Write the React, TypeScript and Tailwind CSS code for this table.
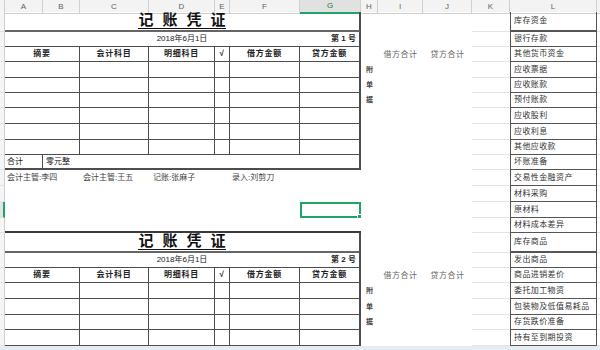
import React from 'react';

type Kind = 'title' | 'date' | 'head' | 'data' | 'total' | 'sign' | 'blank' | 'select';

interface RowSpec {
  kind: Kind;
  h: string;
  no?: number;
  side?: string;
  closeAbove?: boolean; // draws the top edge of the next voucher
}

const rows: RowSpec[] = [
  { kind: 'title', h: 'h-[20px]' },
  { kind: 'date', h: 'h-[15px]', no: 1 },
  { kind: 'head', h: 'h-[15px]' },
  { kind: 'data', h: 'h-[16px]', side: '附' },
  { kind: 'data', h: 'h-[15px]', side: '单' },
  { kind: 'data', h: 'h-[15px]', side: '据' },
  { kind: 'data', h: 'h-[16px]' },
  { kind: 'data', h: 'h-[16px]' },
  { kind: 'data', h: 'h-[15px]' },
  { kind: 'total', h: 'h-[15px]' },
  { kind: 'sign', h: 'h-[16px]' },
  { kind: 'blank', h: 'h-[16px]' },
  { kind: 'select', h: 'h-[16px]' },
  { kind: 'blank', h: 'h-[15px]', closeAbove: true },
  { kind: 'title', h: 'h-[19px]' },
  { kind: 'date', h: 'h-[16px]', no: 2 },
  { kind: 'head', h: 'h-[15px]' },
  { kind: 'data', h: 'h-[16px]', side: '附' },
  { kind: 'data', h: 'h-[16px]', side: '单' },
  { kind: 'data', h: 'h-[15px]', side: '据' },
  { kind: 'data', h: 'h-[16px]' },
];

const accounts = [
  '库存资金', '银行存款', '其他货币资金', '应收票据', '应收账款', '预付账款', '应收股利',
  '应收利息', '其他应收款', '坏账准备', '交易性金融资产', '材料采购', '原材料', '材料成本差异',
  '库存商品', '发出商品', '商品进销差价', '委托加工物资', '包装物及低值易耗品', '存货跌价准备', '持有至到期投资',
];

const colLabels = ['A', 'B', 'C', 'D', 'E', 'F', 'G', 'H', 'I', 'J', 'K', 'L'];

const grid = 'grid grid-cols-[5px_38px_37px_69px_66px_15px_70px_61px_17px_45px_49px_38px_87px_3px]';
const ln = 'border-[#4d4d4d]';

function Cell({ className = '', children }: { className?: string; children?: React.ReactNode }) {
  return <div className={`flex items-center whitespace-nowrap ${className}`}>{children}</div>;
}

function VoucherCells({ r }: { r: RowSpec }) {
  switch (r.kind) {
    case 'title':
      return (
        <Cell className={`col-span-7 justify-center items-end border-r-2 ${ln} border-b-2 border-b-[#666]`}>
          <div className="mb-[1px] flex gap-[9px] border-b border-[#111] text-[15px] leading-[16px] font-bold text-[#111]">
            {['记', '账', '凭', '证'].map((c) => (
              <span key={c}>{c}</span>
            ))}
          </div>
        </Cell>
      );
    case 'date':
      return (
        <>
          <Cell className={`col-span-3 border-b ${ln}`} />
          <Cell className={`justify-center border-b ${ln} text-[8px] text-[#222]`}>2018年6月1日</Cell>
          <Cell className={`col-span-2 border-b ${ln}`} />
          <Cell className={`justify-end pr-[3px] border-b border-r-2 ${ln} text-[8px] font-bold text-[#222]`}>
            第 {r.no} 号
          </Cell>
        </>
      );
    case 'head':
    case 'data': {
      const t = r.kind === 'head';
      const c = `justify-center border-r border-b ${ln} text-[8px] font-bold tracking-[0.7px] text-[#222]`;
      return (
        <>
          <Cell className={`col-span-2 ${c}`}>{t && '摘要'}</Cell>
          <Cell className={c}>{t && '会计科目'}</Cell>
          <Cell className={c}>{t && '明细科目'}</Cell>
          <Cell className={c}>{t && '√'}</Cell>
          <Cell className={c}>{t && '借方金额'}</Cell>
          <Cell className={`${c} border-r-2`}>{t && '贷方金额'}</Cell>
        </>
      );
    }
    case 'total':
      return (
        <>
          <Cell className={`pl-[2px] border-r border-b-2 ${ln} text-[8px] text-[#222]`}>合计</Cell>
          <Cell className={`col-span-6 pl-[3px] border-r-2 border-b-2 ${ln} text-[8px] text-[#222]`}>零元整</Cell>
        </>
      );
    case 'sign':
      return (
        <>
          <Cell className="pl-[2px] text-[8px] text-[#444]">会计主管:李四</Cell>
          <Cell />
          <Cell className="pl-[3px] text-[8px] text-[#444]">会计主管:王五</Cell>
          <Cell className="pl-[4px] text-[8px] text-[#444]">记账:张麻子</Cell>
          <Cell />
          <Cell className="pl-[2px] text-[8px] text-[#444]">录入:刘剪刀</Cell>
          <Cell />
        </>
      );
    case 'select':
      return (
        <>
          <Cell className="col-span-6" />
          <div className="relative border-2 border-[#21a366]">
            <div className="absolute -right-[3px] -bottom-[3px] h-[5px] w-[5px] border border-white bg-[#21a366]" />
          </div>
        </>
      );
    default:
      return <Cell className={`col-span-7 ${r.closeAbove ? 'border-b-2 border-[#3a3a3a]' : ''}`} />;
  }
}

export default function App() {
  return (
    <div className="h-[350px] w-[600px] overflow-hidden bg-white font-['Liberation_Sans','Noto_Sans_CJK_SC',sans-serif]">
      {/* column letters */}
      <div className={`${grid} h-[12px] bg-[#f3f3f3]`}>
        <div className="border-r border-b border-[#d0d0d0]" />
        {colLabels.map((l) =>
          l === 'G' ? (
            <Cell key={l} className="justify-center border-r border-[#d0d0d0] border-b-2 border-b-[#21a366] bg-[#e1e1e1] text-[8px] text-[#217346]">
              {l}
            </Cell>
          ) : (
            <Cell key={l} className="justify-center border-r border-b border-[#d0d0d0] text-[8px] text-[#5f5f5f]">
              {l}
            </Cell>
          )
        )}
        <div className="border-b border-[#d0d0d0]" />
      </div>

      {rows.map((r, i) => {
        const thickL = r.kind === 'title';
        return (
          <div key={i} className={`${grid} ${r.h}`}>
            {r.kind === 'select' ? (
              <div className="border-r-2 border-b border-[#e0e0e0] border-r-[#21a366] bg-[#e4e4e4]" />
            ) : (
              <div className="border-r border-b border-[#e2e2e2] border-r-[#cfcfcf] bg-[#f5f5f5]" />
            )}
            <VoucherCells r={r} />
            <Cell className="justify-center text-[7px] font-bold text-[#444]">{r.side}</Cell>
            <Cell className="justify-center text-[8px] tracking-[0.5px] text-[#666]">{r.kind === 'head' && '借方合计'}</Cell>
            <Cell className="justify-center text-[8px] tracking-[0.5px] text-[#666]">{r.kind === 'head' && '贷方合计'}</Cell>
            <div className="border-b border-[#e3e3e3]" />
            <Cell
              className={`pl-[3px] border-l border-r border-[#555] ${thickL ? 'border-b-2' : 'border-b'} text-[8px] tracking-[0.4px] text-[#333]`}
            >
              {accounts[i]}
            </Cell>
            <div className="border-b border-[#e3e3e3]" />
          </div>
        );
      })}

      <div className="h-[4px] bg-[#e3eef4]" />
    </div>
  );
}
